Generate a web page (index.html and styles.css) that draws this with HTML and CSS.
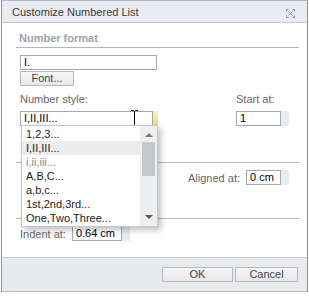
FILE: index.html
```html
<!DOCTYPE html>
<html lang="en">
<head>
    <meta charset="UTF-8">
    <title>Customize Numbered List</title>
    <link rel="stylesheet" href="styles.css">
</head>
<body>

<div class="dialog">
    <!-- title bar -->
    <div class="titlebar">
        <span>Customize Numbered List</span>
        <svg class="close" width="9" height="9" viewBox="0 0 9 9">
            <path d="M0.5 2.5V0.5H2.5M6.5 0.5H8.5V2.5M8.5 6.5V8.5H6.5M2.5 8.5H0.5V6.5M2.5 2.5L6.5 6.5M6.5 2.5L2.5 6.5" stroke="#8a8f96" fill="none"/>
        </svg>
    </div>

    <div class="content">
        <div class="section-title">Number format</div>
        <div class="section">
            <div class="field wide">I.</div>
            <button class="btn font-btn">Font...</button>

            <div class="row">
                <div class="col">
                    <div class="label">Number style:</div>
                    <div class="select">
                        <div class="field select-field">I,II,III...</div>
                        <div class="select-arrow"></div>
                        <svg class="ibeam" width="9" height="16" viewBox="0 0 9 16">
                            <path d="M1 0.5H3.5L4.5 1.5L5.5 0.5H8M4.5 1.5V14.5M1 15.5H3.5L4.5 14.5L5.5 15.5H8" stroke="#000" fill="none"/>
                        </svg>
                    </div>
                </div>
                <div class="col right">
                    <div class="label">Start at:</div>
                    <div class="spin">
                        <div class="field small">1</div>
                        <div class="spin-btn"></div>
                    </div>
                </div>
            </div>
        </div>

        <!-- titles of these two sections are hidden under the open list -->
        <div class="section-title"></div>
        <div class="section pos">
            <div class="inline right-row">
                <span class="label">Aligned at:</span>
                <div class="spin">
                    <div class="field cm">0 cm</div>
                    <div class="spin-btn"></div>
                </div>
            </div>
        </div>

        <div class="section-title"></div>
        <div class="section indent-sec">
            <div class="inline">
                <span class="label">Indent at:</span>
                <div class="spin">
                    <div class="field indent">0.64 cm</div>
                    <div class="spin-btn"></div>
                </div>
            </div>
        </div>

        <!-- open dropdown of number styles -->
        <div class="dropdown">
            <ul class="list">
                <li>1,2,3...</li>
                <li class="selected">I,II,III...</li>
                <li class="dim">i,ii,iii...</li>
                <li>A,B,C...</li>
                <li>a,b,c...</li>
                <li>1st,2nd,3rd...</li>
                <li>One,Two,Three...</li>
            </ul>
            <div class="scrollbar">
                <div class="arrow up"></div>
                <div class="thumb"></div>
                <div class="arrow down"></div>
            </div>
        </div>
    </div>

    <div class="footer">
        <button class="btn ok">OK</button>
        <button class="btn cancel">Cancel</button>
    </div>
</div>

</body>
</html>
```

FILE: styles.css
```css
body {
    margin: 0;
    background: #fff;
    font-family: "Liberation Sans", Arial, sans-serif;
    font-size: 11px;
    color: #333;
}

.dialog {
    width: 305px;
    margin-left: 1px;
    border-left: 1px solid #8e949b;
    border-right: 1px solid #8e949b;
    border-top: 1px solid #b5b9bf;
}

.titlebar {
    height: 21px;
    background: #e9ecf0;
    border-bottom: 1px solid #c3c7cd;
    display: flex;
    align-items: center;
    justify-content: space-between;
    padding: 0 12px 0 10px;
    color: #3a3a3a;
}
.close {
    margin-top: 3px;
}

.content {
    position: relative;
    padding: 9px 8px 16px 14px;
}

.section-title {
    height: 15px;
    border-bottom: 1px solid #b4b8be;
    font-weight: bold;
    color: #9ea4ab;
    line-height: 13px;
    padding-left: 3px;
}
.section {
    padding: 7px 0 0 4px;
}
.section.pos {
    height: 40px;
    padding-top: 7px;
    box-sizing: border-box;
}
.section.indent-sec {
    padding-top: 7px;
}

.field {
    height: 13px;
    border: 1px solid #a3a8ae;
    background: #fff;
    padding-left: 3px;
    line-height: 13px;
    color: #000;
    white-space: nowrap;
    overflow: hidden;
}
.field.wide {
    width: 132px;
}

.btn {
    font-family: inherit;
    font-size: 11px;
    color: #444;
    border: 1px solid #b5b8bc;
    background: linear-gradient(#f7f7f7, #e6e7e9);
    padding: 0;
    height: 15px;
    line-height: 13px;
}
.font-btn {
    display: block;
    width: 54px;
    margin-top: 1px;
}

.row {
    display: flex;
    justify-content: space-between;
    margin-top: 7px;
    width: 269px;
    height: 54px;
}
.label {
    color: #666;
    white-space: nowrap;
}
.col .label {
    height: 13px;
    margin-bottom: 5px;
}

.select {
    position: relative;
    display: flex;
}
.select-field {
    width: 128px;
}
.select-arrow {
    width: 5px;
    height: 15px;
    background: linear-gradient(#fbeebb, #f3d77c);
}
.ibeam {
    position: absolute;
    left: 110px;
    top: -1px;
}

.spin {
    display: flex;
}
.spin-btn {
    width: 8px;
    height: 15px;
    background: #e8ebef;
}
.field.small {
    width: 40px;
}
.field.cm {
    width: 30px;
}
.field.indent {
    width: 45px;
}

.inline {
    display: flex;
    align-items: center;
}
.inline .label {
    margin-right: 6px;
}
.right-row {
    justify-content: flex-end;
    width: 269px;
}

.dropdown {
    position: absolute;
    left: 19px;
    top: 102px;
    width: 135px;
    height: 100px;
    background: #fff;
    border: 1px solid #c4c7cb;
    display: flex;
    box-shadow: 3px 3px 6px rgba(0, 0, 0, 0.25);
}
.list {
    list-style: none;
    margin: 0;
    padding: 1px 0 0 0;
    flex: 1;
}
.list li {
    height: 14px;
    line-height: 14px;
    padding-left: 4px;
    color: #222;
    white-space: nowrap;
}
.list li.selected {
    background: #ebecee;
}
.list li.dim {
    color: #888;
}

.scrollbar {
    width: 17px;
    background: #eeeff1;
    position: relative;
}
.thumb {
    position: absolute;
    left: 2px;
    top: 16px;
    width: 13px;
    height: 34px;
    background: #c6c7c9;
}
.arrow {
    position: absolute;
    left: 5px;
    width: 0;
    height: 0;
    border-left: 4px solid transparent;
    border-right: 4px solid transparent;
}
.arrow.up {
    top: 7px;
    border-bottom: 4px solid #777;
}
.arrow.down {
    bottom: 7px;
    border-top: 4px solid #555;
}

.footer {
    height: 33px;
    background: #e8eaee;
    border-top: 1px solid #c8ccd2;
    border-bottom: 1px solid #b5b9bf;
    display: flex;
    justify-content: flex-end;
    align-items: center;
    padding-right: 9px;
    gap: 2px;
}
.ok {
    width: 71px;
}
.cancel {
    width: 63px;
}
```
